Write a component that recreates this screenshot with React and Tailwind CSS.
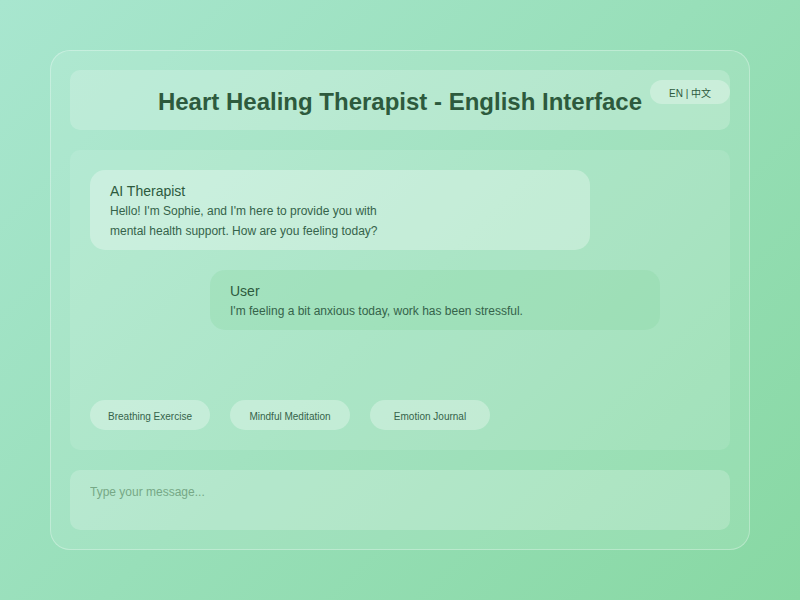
export default function App() {
  const quick = ["Breathing Exercise", "Mindful Meditation", "Emotion Journal"];

  return (
    <div className="w-[800px] h-[600px] bg-[linear-gradient(135deg,#a8e6cf,#88d8a3)] p-[50px] font-['Liberation_Sans','Noto_Sans_CJK_SC',sans-serif] text-[#2d5a3d]">
      <div className="h-[500px] flex flex-col gap-5 p-5 rounded-[20px] bg-white/10 ring-1 ring-inset ring-white/30">
        {/* header */}
        <div className="relative h-[60px] shrink-0 flex items-center justify-center rounded-[10px] bg-white/20">
          <h1 className="text-[24px] font-bold mt-[4px]">Heart Healing Therapist - English Interface</h1>
          <button className="absolute right-0 top-[10px] w-[80px] h-[24px] pt-[2px] rounded-[12px] bg-white/30 text-[10px] text-[#2d5a3d]">
            EN | 中文
          </button>
        </div>

        {/* chat */}
        <div className="h-[300px] shrink-0 flex flex-col p-5 rounded-[10px] bg-white/10">
          <div className="w-[500px] px-5 pt-[11px] pb-[9px] rounded-[15px] bg-white/30">
            <div className="text-[14px] leading-[20px]">AI Therapist</div>
            <p className="text-[12px] leading-[20px] text-[#35634a]">
              Hello! I'm Sophie, and I'm here to provide you with
              <br />
              mental health support. How are you feeling today?
            </p>
          </div>

          <div className="mt-5 ml-[120px] w-[450px] px-5 pt-[11px] pb-[9px] rounded-[15px] bg-[#88d8a3]/30">
            <div className="text-[14px] leading-[20px]">User</div>
            <p className="text-[12px] leading-[20px] text-[#35634a]">I'm feeling a bit anxious today, work has been stressful.</p>
          </div>

          <div className="mt-auto flex gap-5">
            {quick.map((q) => (
              <button key={q} className="w-[120px] h-[30px] pt-[2px] rounded-[15px] bg-white/30 text-[10px] text-[#35634a]">
                {q}
              </button>
            ))}
          </div>
        </div>

        {/* input */}
        <div className="h-[60px] shrink-0 rounded-[10px] bg-white/20 px-5 pt-[9px]">
          <input
            className="w-full bg-transparent outline-none text-[12px] leading-[18px] placeholder:text-[#76a886]"
            placeholder="Type your message..."
          />
        </div>
      </div>
    </div>
  );
}
